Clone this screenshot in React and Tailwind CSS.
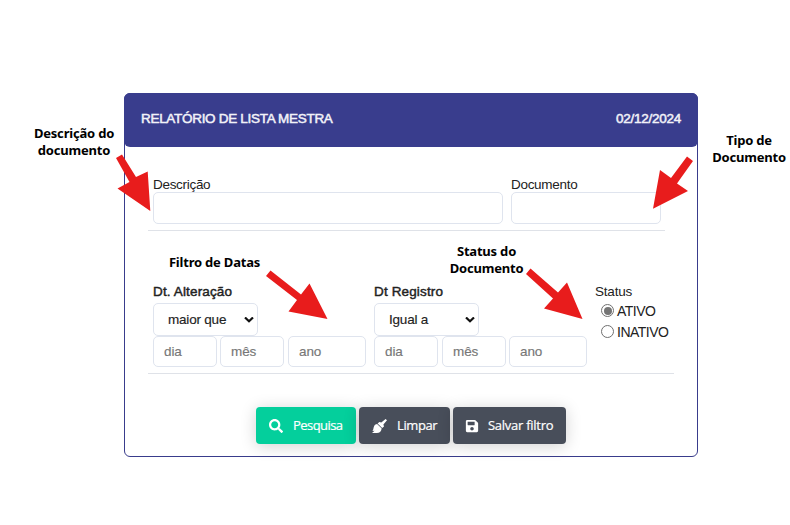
import { FaSearch, FaSave } from "react-icons/fa";

const BOX = "rounded-[5px] border border-[#dfe4ee] bg-white";

function BrushIcon({ className }) {
  return (
    <svg className={className} viewBox="0 0 15 14" fill="currentColor">
      <path d="M13.600 0 L15 1.300 L11.400 5.600 L12 7.500 L10.200 9 L5.600 4.600 L7.400 3 L9.300 3.600 Z" />
      <path d="M5.100 5 L9.700 9.400 C9.200 12.500 7.500 14 4.800 14 L0 14 L2.600 11.700 L0.400 12.100 C1.600 10.900 1.200 8.600 2.300 6.800 C3 5.700 3.900 5.100 5.100 5 Z" />
    </svg>
  );
}

function DateGroup({ title, operator, className, gaps }) {
  return (
    <div className={className}>
      <div className="h-[20px] pt-px text-[13.5px] leading-4 tracking-[0.14px] text-[#222] [-webkit-text-stroke:0.45px_#222]">{title}</div>
      <div className={`${BOX} flex h-[33px] w-[105px] items-center justify-between pl-[14px] pr-[3px] pt-px text-[13.5px] tracking-[-0.2px] text-[#222] [-webkit-text-stroke:0.15px_#222]`}>
        <span>{operator}</span>
        <svg className="h-[6px] w-[10px]" viewBox="0 0 10 6" fill="none">
          <path d="M1 0.500 L5 4.200 L9 0.500" stroke="#111" strokeWidth="2.200" />
        </svg>
      </div>
      <div className={`flex text-[13.5px] tracking-[-0.1px] text-[#777] [-webkit-text-stroke:0.15px_#777] ${gaps}`}>
        <div className={`${BOX} flex h-[31px] w-[64px] items-center pl-[10px] pt-px`}>dia</div>
        <div className={`${BOX} flex h-[31px] w-[64px] items-center pl-[10px] pt-px`}>mês</div>
        <div className={`${BOX} flex h-[31px] w-[78px] items-center pl-[10px] pt-px`}>ano</div>
      </div>
    </div>
  );
}

function Radio({ label, checked }) {
  return (
    <div className="flex h-[21px] items-center pl-[6px]">
      <span className="mb-[2px] flex h-[13px] w-[13px] items-center justify-center rounded-full border border-[#707070] bg-white">
        {checked && <span className="h-[8px] w-[8px] rounded-full bg-[#757575]" />}
      </span>
      <span className="ml-[3px] text-[14px] tracking-[-0.5px] text-[#222]">{label}</span>
    </div>
  );
}

function Button({ icon: Icon, iconClass, className, children }) {
  return (
    <div className={`flex h-[37px] items-center rounded-[4px] pl-[13px] font-['Open_Sans',sans-serif] text-[13px] font-medium text-white shadow-[0_2px_16px_rgba(0,0,0,0.18)] [-webkit-text-stroke:0.2px_#fff] ${className}`}>
      <Icon className={`h-[14px] shrink-0 ${iconClass}`} />
      <span className="whitespace-nowrap">{children}</span>
    </div>
  );
}

function Note({ className, children }) {
  return (
    <div className={`absolute whitespace-nowrap text-center font-['Noto_Sans',sans-serif] text-[13px] font-bold leading-[17px] tracking-[-0.2px] text-black ${className}`}>
      {children}
    </div>
  );
}

export default function App() {
  return (
    <div className="relative h-[525px] w-[790px] overflow-hidden bg-white pl-[124px] pt-[93px] font-['Liberation_Sans',Arial,sans-serif]">
      <div className="h-[364px] w-[574px] rounded-[6px] border border-[#393c8c]">
        <div className="-mx-px -mt-px flex h-[54px] items-center justify-between rounded-[6px] bg-[#393d8d] pb-[2px] pl-[17px] pr-[17px] pt-px text-[13.5px] text-[#f2f2f8] [-webkit-text-stroke:0.5px_#f2f2f8]">
          <span className="tracking-[-0.3px]">RELATÓRIO DE LISTA MESTRA</span>
          <span className="tracking-[-0.25px]">02/12/2024</span>
        </div>

        <div className="ml-[23px] mt-[29px] flex h-[55px] w-[517px] gap-[8px] border-b border-[#dfe2e8] pl-[5px] text-[13.5px] leading-4 tracking-[-0.3px] text-[#222]">
          <div className="w-[350px]">
            <div className="h-4 pt-px">Descrição</div>
            <div className={`${BOX} h-[32px]`} />
          </div>
          <div className="w-[150px]">
            <div className="h-4 pt-px">Documento</div>
            <div className={`${BOX} h-[32px]`} />
          </div>
        </div>

        <div className="ml-[23px] flex h-[143px] w-[526px] border-b border-[#dfe2e8] pl-[5px] pt-[52px]">
          <DateGroup title="Dt. Alteração" operator="maior que" className="w-[221px]" gaps="[&>:nth-child(1)]:mr-[3px] [&>:nth-child(2)]:mr-[4px]" />
          <DateGroup title="Dt Registro" operator="Igual a" className="w-[221px]" gaps="[&>:nth-child(1)]:mr-[4px] [&>:nth-child(2)]:mr-[3px]" />
          <div>
            <div className="h-[18px] pt-px text-[13.5px] leading-4 tracking-[-0.2px] text-[#222]">Status</div>
            <Radio label="ATIVO" checked />
            <Radio label="INATIVO" />
          </div>
        </div>

        <div className="ml-[131px] mt-[33px] flex gap-[3px]">
          <Button icon={FaSearch} iconClass="mr-[10px] w-[14px]" className="w-[100px] bg-[#04cf9c] tracking-[-0.55px]">Pesquisa</Button>
          <Button icon={BrushIcon} iconClass="mr-[10px] w-[15px]" className="w-[91px] bg-[#484e5a] tracking-[-0.4px]">Limpar</Button>
          <Button icon={FaSave} iconClass="-ml-px mr-[9px] w-[14px]" className="w-[113px] bg-[#484e5a] tracking-[-0.27px]">Salvar filtro</Button>
        </div>
      </div>

      <svg className="absolute left-0 top-0 h-[525px] w-[790px]" viewBox="0 0 790 525" fill="#e81c1c">
        <path d="M116 158 L122 154.500 L136 177 L147.700 171.500 L150.300 211 L117.500 188.500 L129.500 182 Z" />
        <path d="M687 156.500 L693 161 L677 183.500 L688 191 L653 208.800 L660 170 L671 178 Z" />
        <path d="M266 276 L270.500 270.500 L301 294.500 L309.500 283.500 L327.500 319 L288.500 311.500 L297 300 Z" />
        <path d="M526 274 L530.500 268.500 L558 292.500 L567 282.500 L582.500 319 L544 308.500 L553 298.500 Z" />
      </svg>
      <Note className="left-[24px] top-[125px] w-[100px]">Descrição do<br />documento</Note>
      <Note className="left-[699px] top-[132px] w-[100px]">Tipo de<br />Documento</Note>
      <Note className="left-[164px] top-[254px] w-[101px]">Filtro de Datas</Note>
      <Note className="left-[436px] top-[243px] w-[101px]">Status do<br />Documento</Note>
    </div>
  );
}
